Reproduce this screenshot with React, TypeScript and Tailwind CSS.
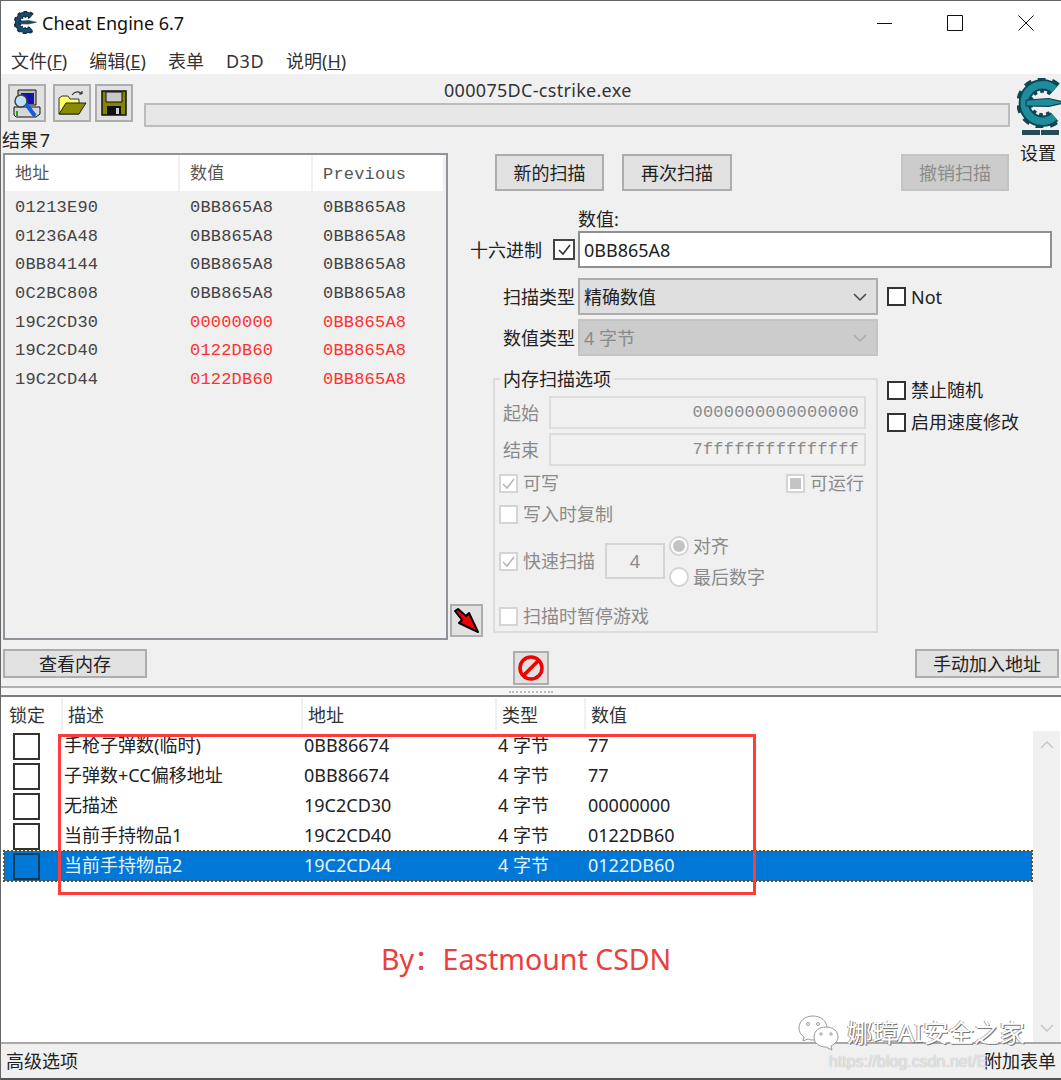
import type { ReactNode } from 'react'

const FOUND = [
  ['01213E90', '0BB865A8', '0BB865A8', false],
  ['01236A48', '0BB865A8', '0BB865A8', false],
  ['0BB84144', '0BB865A8', '0BB865A8', false],
  ['0C2BC808', '0BB865A8', '0BB865A8', false],
  ['19C2CD30', '00000000', '0BB865A8', true],
  ['19C2CD40', '0122DB60', '0BB865A8', true],
  ['19C2CD44', '0122DB60', '0BB865A8', true],
] as const

const TABLE = [
  ['手枪子弹数(临时)', '0BB86674', '77'],
  ['子弹数+CC偏移地址', '0BB86674', '77'],
  ['无描述', '19C2CD30', '00000000'],
  ['当前手持物品1', '19C2CD40', '0122DB60'],
  ['当前手持物品2', '19C2CD44', '0122DB60'],
]

const RING = 'M33 10A16 16 0 1 0 33 34'

function Gear({ size, color, edge }: { size: number; color: string; edge: string }) {
  return (
    <svg width={size} height={size} viewBox="0 0 44 44" fill="none" className="shrink-0">
      <path d={RING} stroke={edge} strokeWidth="14" strokeDasharray="5 4.5" />
      <path d={RING} stroke={edge} strokeWidth="10" />
      <path d={RING} stroke={color} strokeWidth="6.5" />
      <path d="M8 19.5L28 18L43 21.5L28 25L8 24.5Z" fill={color} stroke={edge} strokeWidth="1" />
    </svg>
  )
}

function Btn({ className, disabled, children }: { className: string; disabled?: boolean; children: ReactNode }) {
  return (
    <div
      className={`flex items-center justify-center border-2 ${
        disabled ? 'bg-[#cccccc] border-[#c4c4c4] text-[#8c8c8c]' : 'bg-[#e1e1e1] border-[#adadad] text-[#222]'
      } ${className}`}
    >
      {children}
    </div>
  )
}

function Check({ label, tone = 'on', mark, className = '' }: { label?: string; tone?: 'on' | 'off'; mark?: 'tick' | 'fill'; className?: string }) {
  const off = tone === 'off'
  return (
    <div className={`flex items-center gap-[5px] ${off ? 'text-[#8a8a8a]' : 'text-[#222]'} ${className}`}>
      <div className={`w-[19px] h-[19px] flex items-center justify-center border-2 ${off ? 'border-[#d4d4d4] bg-white' : 'border-[#333] bg-white'}`}>
        {mark === 'tick' && (
          <svg width="15" height="15" viewBox="0 0 15 15" fill="none">
            <path d="M2 8L6 12L13 3" stroke={off ? '#b5b5b5' : '#333'} strokeWidth="1.6" />
          </svg>
        )}
        {mark === 'fill' && <div className="w-[11px] h-[11px] bg-[#c4c4c4]" />}
      </div>
      {label && <span>{label}</span>}
    </div>
  )
}

function Radio({ label, on }: { label: string; on?: boolean }) {
  return (
    <div className="flex items-center gap-[4px] text-[#8a8a8a]">
      <div className="w-[20px] h-[20px] rounded-full bg-white border-2 border-[#d4d4d4] flex items-center justify-center">
        {on && <div className="w-[12px] h-[12px] rounded-full bg-[#c4c4c4]" />}
      </div>
      <span>{label}</span>
    </div>
  )
}

function Chevron({ up, color }: { up?: boolean; color: string }) {
  return (
    <svg width="16" height="10" viewBox="0 0 16 10" fill="none">
      <path d={up ? 'M2 8L8 2L14 8' : 'M2 2L8 8L14 2'} stroke={color} strokeWidth="1.5" />
    </svg>
  )
}

function RangeField({ label, value }: { label: string; value: string }) {
  return (
    <div className="flex items-center h-[33px] mb-[4px] text-[#8a8a8a]">
      <span className="w-[46px] ml-[8px]">{label}</span>
      <div className="w-[317px] h-full flex items-center justify-end pr-[5px] border-2 border-[#dcdcdc] font-['Liberation_Mono',monospace] text-[17px] tracking-[0.2px]">
        {value}
      </div>
    </div>
  )
}

function ComputerIcon() {
  return (
    <svg width="30" height="30" viewBox="0 0 30 30">
      <path d="M6 2H24V17H6Z" fill="#bdbdbd" stroke="#111" />
      <path d="M9 5H22V16H9Z" fill="#1414a8" />
      <path d="M2 19H28V26L24 29H4L2 27Z" fill="#d6d6d6" stroke="#111" />
      <path d="M5 23V28" stroke="#16b016" strokeWidth="2" />
      <circle cx="9" cy="13" r="6" fill="#bfe0f5" stroke="#444" strokeWidth="1.5" />
      <path d="M14 16L23 28" stroke="#1060e0" strokeWidth="4" />
    </svg>
  )
}

function FolderIcon() {
  return (
    <svg width="30" height="26" viewBox="0 0 30 26">
      <path d="M2 24V8L5 6H11L13 9H22V24Z" fill="#ffff66" stroke="#333" />
      <path d="M2 24L9 13H29L22 24Z" fill="#8c8c00" stroke="#222" />
      <path d="M15 5C18 1 22 1 25 4M25 4L25 1M25 4L22 4" stroke="#333" fill="none" strokeWidth="1.2" />
    </svg>
  )
}

function FloppyIcon() {
  return (
    <svg width="26" height="26" viewBox="0 0 26 26">
      <path d="M1 1H25V25H1Z" fill="#858500" stroke="#111" strokeWidth="1.5" />
      <path d="M5 2H21V12H5Z" fill="#c8c8c8" stroke="#111" />
      <path d="M6 16H20V25H6Z" fill="#111" />
      <path d="M15 18H18V24H15Z" fill="#d0d0d0" />
    </svg>
  )
}

function ArrowIcon() {
  return (
    <svg width="26" height="26" viewBox="0 0 26 26">
      <path d="M1 3L4 1L12 8L15 5L24 24L5 15L8 12Z" fill="#f00000" stroke="#000" strokeWidth="2" strokeLinejoin="round" />
    </svg>
  )
}

function StopIcon() {
  return (
    <svg width="28" height="28" viewBox="0 0 28 28" fill="none">
      <circle cx="14" cy="14" r="11" stroke="#f00000" strokeWidth="3.5" />
      <path d="M7 21L21 7" stroke="#f00000" strokeWidth="3.5" />
    </svg>
  )
}

function WeChatIcon() {
  return (
    <svg width="42" height="36" viewBox="0 0 42 36" fill="#fff" stroke="#999" strokeWidth="1">
      <path d="M15 1C7 1 1 6 1 13C1 17 3 20 6 22L5 26L10 24C12 25 14 25 16 25C22 25 29 20 29 13C29 6 23 1 15 1Z" />
      <path d="M28 12C21 12 16 16 16 22C16 28 21 32 28 32L34 35L33 31C37 29 40 26 40 22C40 16 35 12 28 12Z" />
      <circle cx="10" cy="9" r="1.5" />
      <circle cx="20" cy="9" r="1.5" />
      <circle cx="23" cy="19" r="1.2" />
      <circle cx="33" cy="19" r="1.2" />
    </svg>
  )
}

export default function App() {
  return (
    <div className="relative w-[1061px] h-[1080px] overflow-hidden flex flex-col bg-[#f0f0f0] text-[18px] leading-[20px] text-[#222] font-['Noto_Sans','Noto_Sans_CJK_SC',sans-serif] border-t border-l border-[#666]">
      {/* title + menu */}
      <div className="bg-white h-[73px] shrink-0">
        <div className="flex items-center h-[43px] pl-[13px]">
          <Gear size={23} color="#1d4a68" edge="#123247" />
          <span className="ml-[5px] text-[#111] text-[18px]">Cheat Engine 6.7</span>
          <div className="ml-auto flex items-center">
            <svg width="16" height="16" viewBox="0 0 16 16" className="mr-[54px]"><path d="M0 8.5H15" stroke="#111" /></svg>
            <svg width="16" height="16" viewBox="0 0 16 16" className="mr-[55px]"><path d="M0.5 0.5H15.5V15.5H0.5Z" stroke="#111" fill="none" /></svg>
            <svg width="16" height="16" viewBox="0 0 16 16" className="mr-[27px]"><path d="M0.5 0.5L15.5 15.5M15.5 0.5L0.5 15.5" stroke="#111" /></svg>
          </div>
        </div>
        <div className="flex items-center h-[30px] pl-[10px] pt-[4px] gap-[22px] text-[#333]">
          <span>文件(<u>F</u>)</span>
          <span>编辑(<u>E</u>)</span>
          <span>表单</span>
          <span className="tracking-[0.5px]">D3D</span>
          <span>说明(<u>H</u>)</span>
        </div>
      </div>

      {/* toolbar */}
      <div className="flex h-[58px] shrink-0">
        <div className="flex pt-[10px] pl-[7px]">
          <Btn className="w-[38px] h-[38px]"><ComputerIcon /></Btn>
          <Btn className="w-[38px] h-[38px] ml-[7px]"><FolderIcon /></Btn>
          <Btn className="w-[38px] h-[38px] ml-[4px]"><FloppyIcon /></Btn>
        </div>
        <div className="flex flex-col w-[868px] ml-[11px] pt-[6px]">
          <span className="h-[23px] ml-[300px] text-[#333] tracking-[0.3px] whitespace-nowrap">000075DC-cstrike.exe</span>
          <div className="w-full h-[24px] bg-[#e6e6e6] border-2 border-[#bcbcbc]" />
        </div>
        <div className="ml-[7px] flex flex-col w-[44px] pt-[4px]">
          <Gear size={50} color="#1f8c9e" edge="#0e4654" />
          <div className="flex gap-[1px] mt-[2px] ml-[5px]">
            <div className="w-[18px] h-[5px] bg-[#234a55]" />
            <div className="w-[18px] h-[5px] bg-[#234a55]" />
          </div>
          <span className="mt-[8px] ml-[3px] whitespace-nowrap">设置</span>
        </div>
      </div>

      {/* scan area */}
      <div className="flex h-[508px] shrink-0">
        <div className="w-[449px] flex flex-col pl-[2px]">
          <span className="-ml-[1px] -mt-[2px] h-[23px] whitespace-nowrap [word-spacing:-3px]">结果 7</span>
          <div className="w-[445px] h-[487px] border-2 border-[#8f939a] bg-[#f0f0f0]">
            <div className="flex h-[36px] bg-white mr-[3px] text-[#555] font-['Liberation_Mono','Noto_Sans_CJK_SC',monospace] text-[17px] tracking-[0.2px] items-center">
              <div className="w-[175px] pl-[10px] pt-[4px] border-r-2 border-[#f0f0f0] h-full flex items-center">地址</div>
              <div className="w-[133px] pl-[10px] pt-[4px] border-r-2 border-[#f0f0f0] h-full flex items-center">数值</div>
              <div className="pl-[10px] pt-[4px]">Previous</div>
            </div>
            <div className="pt-[2px] font-['Liberation_Mono',monospace] text-[17px] tracking-[0.2px] text-[#444]">
              {FOUND.map(([addr, value, prev, changed]) => (
                <div key={addr} className="flex items-center h-[28.6px] first:mt-[1px]">
                  <span className="w-[175px] pl-[10px]">{addr}</span>
                  <span className={`w-[133px] pl-[10px] ${changed ? 'text-[#ff3030]' : ''}`}>{value}</span>
                  <span className={`pl-[10px] ${changed ? 'text-[#ff3030]' : ''}`}>{prev}</span>
                </div>
              ))}
            </div>
          </div>
        </div>

        <div className="w-[611px] flex flex-col">
          <div className="flex mt-[22px] h-[37px]">
            <Btn className="ml-[45px] w-[109px]">新的扫描</Btn>
            <Btn className="ml-[18px] w-[110px]">再次扫描</Btn>
            <Btn disabled className="ml-[169px] w-[108px]">撤销扫描</Btn>
          </div>
          <span className="ml-[128px] mt-[18px] h-[22px] whitespace-nowrap">数值:</span>
          <div className="flex items-center h-[37px]">
            <span className="ml-[20px] w-[83px] whitespace-nowrap">十六进制</span>
            <div className="w-[22px] h-[21px] flex items-center justify-center border-2 border-[#444] bg-white">
              <svg width="15" height="15" viewBox="0 0 15 15" fill="none"><path d="M2 8L6 12L13 3" stroke="#333" strokeWidth="1.6" /></svg>
            </div>
            <div className="ml-[3px] w-[474px] h-full bg-white border-2 border-[#8f8f8f] flex items-center pl-[4px]">0BB865A8</div>
          </div>
          <div className="flex items-center h-[37px] mt-[10px]">
            <span className="ml-[53px] w-[75px] whitespace-nowrap">扫描类型</span>
            <div className="w-[300px] h-full flex items-center justify-between bg-[#dfdfdf] border-2 border-[#adadad] pl-[4px] pr-[8px]">
              <span>精确数值</span>
              <Chevron color="#444" />
            </div>
            <Check label="Not" className="ml-[9px]" />
          </div>
          <div className="flex items-center h-[37px] mt-[4px]">
            <span className="ml-[53px] w-[75px] whitespace-nowrap">数值类型</span>
            <div className="w-[300px] h-full flex items-center justify-between bg-[#cccccc] border-2 border-[#c4c4c4] pl-[4px] pr-[8px] text-[#8a8a8a]">
              <span>4 字节</span>
              <Chevron color="#aaa" />
            </div>
          </div>

          <div className="flex items-start h-[259px] mt-[22px]">
            <Btn className="self-end w-[33px] h-[33px]"><ArrowIcon /></Btn>
            <div className="relative ml-[10px] w-[385px] h-[255px] border-2 border-[#dcdcdc] pt-[16px]">
              <span className="absolute -top-[11px] left-[5px] px-[3px] bg-[#f0f0f0] whitespace-nowrap">内存扫描选项</span>
              <RangeField label="起始" value="0000000000000000" />
              <RangeField label="结束" value="7fffffffffffffff" />
              <div className="flex justify-between items-center h-[20px] mt-[7px] pl-[4px] pr-[12px]">
                <Check tone="off" mark="tick" label="可写" />
                <Check tone="off" mark="fill" label="可运行" />
              </div>
              <Check tone="off" label="写入时复制" className="pl-[4px] mt-[11px]" />
              <div className="flex items-center h-[52px] mt-[11px] pl-[4px]">
                <Check tone="off" mark="tick" label="快速扫描" />
                <div className="ml-[10px] w-[60px] h-[36px] border-2 border-[#d4d4d4] flex items-center justify-center text-[#8a8a8a]">4</div>
                <div className="ml-[4px] flex flex-col gap-[11px]">
                  <Radio on label="对齐" />
                  <Radio label="最后数字" />
                </div>
              </div>
              <Check tone="off" label="扫描时暂停游戏" className="pl-[4px] mt-[19px]" />
            </div>
            <div className="ml-[9px] flex flex-col gap-[12px] pt-[2px]">
              <Check label="禁止随机" />
              <Check label="启用速度修改" />
            </div>
          </div>
        </div>
      </div>

      {/* action row */}
      <div className="flex items-start h-[46px] shrink-0 pt-[9px] pl-[2px]">
        <Btn className="w-[144px] h-[29px]">查看内存</Btn>
        <Btn className="ml-[366px] mt-[2px] w-[36px] h-[34px]"><StopIcon /></Btn>
        <Btn className="ml-[366px] w-[144px] h-[29px]">手动加入地址</Btn>
      </div>

      {/* splitter */}
      <div className="h-[11px] shrink-0 bg-[#f6f6f6] border-t-2 border-b-2 border-t-[#b0b0b0] border-b-[#7c7c7c] flex items-center justify-center">
        <div className="w-[44px] border-t-2 border-dotted border-[#bbb]" />
      </div>

      {/* address table */}
      <div className="bg-white h-[345px] shrink-0 flex flex-col">
        <div className="flex items-center h-[34px] text-[#333]">
          {[
            ['锁定', 'w-[62px] pl-[8px]'],
            ['描述', 'w-[240px] pl-[5px]'],
            ['地址', 'w-[194px] pl-[5px]'],
            ['类型', 'w-[89px] pl-[5px]'],
            ['数值', 'pl-[5px]'],
          ].map(([h, cls]) => (
            <div key={h} className={`h-[32px] pt-[2px] flex items-center border-r-2 border-[#f0f0f0] last:border-r-0 ${cls}`}>{h}</div>
          ))}
        </div>
        <div className="flex flex-1 min-h-0">
          <div className="w-[1032px] pl-[3px]">
            {TABLE.map(([desc, addr, value], i) => {
              const sel = i === 4
              return (
                <div
                  key={desc}
                  className={`flex items-center h-[30px] w-[1028px] ${sel ? 'bg-[#0078d7] text-[#e6f2fb] outline-2 -outline-offset-1 outline-dotted outline-[#7a4a10]' : ''}`}
                >
                  <div className={`ml-[9px] w-[27px] h-[27px] border-2 ${sel ? 'border-[#123a5c]' : 'border-[#333]'}`} />
                  <span className="ml-[24px] w-[240px] pb-[2px] whitespace-nowrap">{desc}</span>
                  <span className="w-[194px] pb-[2px]">{addr}</span>
                  <span className="w-[90px] pb-[2px]">4 字节</span>
                  <span className="pb-[2px]">{value}</span>
                </div>
              )
            })}
          </div>
          <div className="w-[27px] bg-[#f0f0f0] flex flex-col items-center justify-between py-[9px]">
            <Chevron up color="#c8c8c8" />
            <Chevron color="#c8c8c8" />
          </div>
        </div>
      </div>

      {/* footer */}
      <div className="flex-1 flex items-center justify-between pl-[5px] pr-[5px] border-t-2 border-[#a8a8a8] border-b-2 border-b-[#555]">
        <span>高级选项</span>
        <span>附加表单</span>
      </div>

      {/* annotations laid over the screenshot */}
      <div className="absolute left-[57px] top-[733px] w-[698px] h-[161px] border-[3px] border-[#ff3b3b]" />
      <div className="absolute left-[380px] top-[939px] text-[#e8413c] text-[28.5px] leading-[38px] whitespace-nowrap">
        By：Eastmount CSDN
      </div>
      <div className="absolute left-[797px] top-[1014px]"><WeChatIcon /></div>
      <div className="absolute left-[846px] top-[1017px] text-white text-[25.5px] leading-[28px] whitespace-nowrap [text-shadow:1px_1px_0_#777,-1px_0_0_#999]">
        娜璋AI安全之家
      </div>
      <div className="absolute left-[828px] top-[1051px] text-white/70 text-[16px] leading-[20px] whitespace-nowrap [text-shadow:0_0_1px_#999] font-['Liberation_Sans',sans-serif]">
        https://blog.csdn.net/E
      </div>
    </div>
  )
}
